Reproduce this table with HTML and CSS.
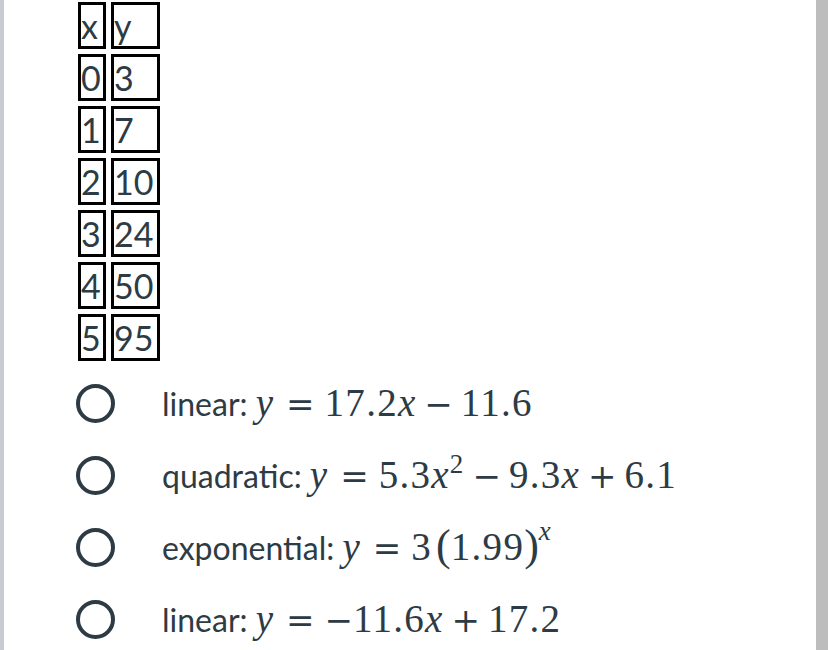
FILE: index.html
```html
<!DOCTYPE html>
<html>
<head>
<meta charset="utf-8">
<link rel="stylesheet" href="styles.css">
</head>
<body>
<div class="frame">
  <table class="data">
    <tr><td class="cx">x</td><td class="cy">y</td></tr>
    <tr><td class="cx">0</td><td class="cy">3</td></tr>
    <tr><td class="cx">1</td><td class="cy">7</td></tr>
    <tr><td class="cx">2</td><td class="cy">10</td></tr>
    <tr><td class="cx">3</td><td class="cy">24</td></tr>
    <tr><td class="cx">4</td><td class="cy">50</td></tr>
    <tr><td class="cx">5</td><td class="cy">95</td></tr>
  </table>
  <div class="options">
    <div class="option">
      <span class="radio"></span>
      <span class="label">linear: <span class="math"><i>y</i><span class="rel">=</span>17.2<i>x</i><span class="bin">−</span>11.6</span></span>
    </div>
    <div class="option">
      <span class="radio"></span>
      <span class="label">quadratic: <span class="math"><i>y</i><span class="rel">=</span>5.3<i>x</i><sup>2</sup><span class="bin">−</span>9.3<i>x</i><span class="bin">+</span>6.1</span></span>
    </div>
    <div class="option">
      <span class="radio"></span>
      <span class="label">exponential: <span class="math"><i>y</i><span class="rel">=</span>3<span class="paren open">(</span>1.99<span class="paren">)</span><sup class="supx"><i>x</i></sup></span></span>
    </div>
    <div class="option">
      <span class="radio"></span>
      <span class="label">linear: <span class="math"><i>y</i><span class="rel">=</span><span class="neg">−</span>11.6<i>x</i><span class="bin">+</span>17.2</span></span>
    </div>
  </div>
</div>
</body>
</html>
```

FILE: styles.css
```css
html, body {
  margin: 0;
  padding: 0;
  background: #ffffff;
}
.frame {
  box-sizing: border-box;
  width: 828px;
  height: 650px;
  overflow: hidden;
  border-left: 4px solid #c8cbd2;
  border-right: 12px solid #bdbdbd;
  font-family: Lato, "Open Sans", sans-serif;
  color: #2d3b45;
}
.data {
  border-collapse: separate;
  border-spacing: 5px;
  margin-top: -3px;
  margin-left: 69px;
}
.data td {
  box-sizing: border-box;
  height: 47px;
  border: 3px solid #000;
  padding: 0;
  font-size: 34px;
  line-height: 40px;
  vertical-align: middle;
  color: #2d3b45;
  white-space: nowrap;
}
.data td.cx { width: 28px; }
.data td.cy { width: 49px; }
.options {
  display: flex;
  flex-direction: column;
  margin-top: 1px;
  margin-left: 72px;
}
.option {
  display: flex;
  align-items: center;
  height: 72px;
  line-height: 40px;
}
.radio {
  box-sizing: border-box;
  width: 39px;
  height: 39px;
  border: 4px solid #2d3b45;
  border-radius: 50%;
  flex: none;
}
.label {
  margin-left: 47px;
  font-size: 32px;
  white-space: nowrap;
}
.math {
  font-family: "Liberation Serif", "DejaVu Serif", serif;
  font-size: 39px;
  letter-spacing: 1.3px;
  color: #2d3b45;
}
.math i {
  font-style: italic;
  letter-spacing: 0;
  margin-right: 1px;
}
.rel, .bin, .neg {
  font-family: "DejaVu Serif", serif;
  font-size: 34px;
  letter-spacing: 0;
}
.rel {
  margin: 0 10px 0 12px;
}
.bin {
  margin: 0 8px;
}
.math sup {
  font-size: 27px;
  vertical-align: 15px;
  line-height: 0;
}
.paren {
  font-size: 44px;
  margin: 0;
  letter-spacing: 0;
}
.paren.open {
  margin-left: 4px;
}
.math .supx {
  vertical-align: 20px;
  margin-left: 0;
}
```
